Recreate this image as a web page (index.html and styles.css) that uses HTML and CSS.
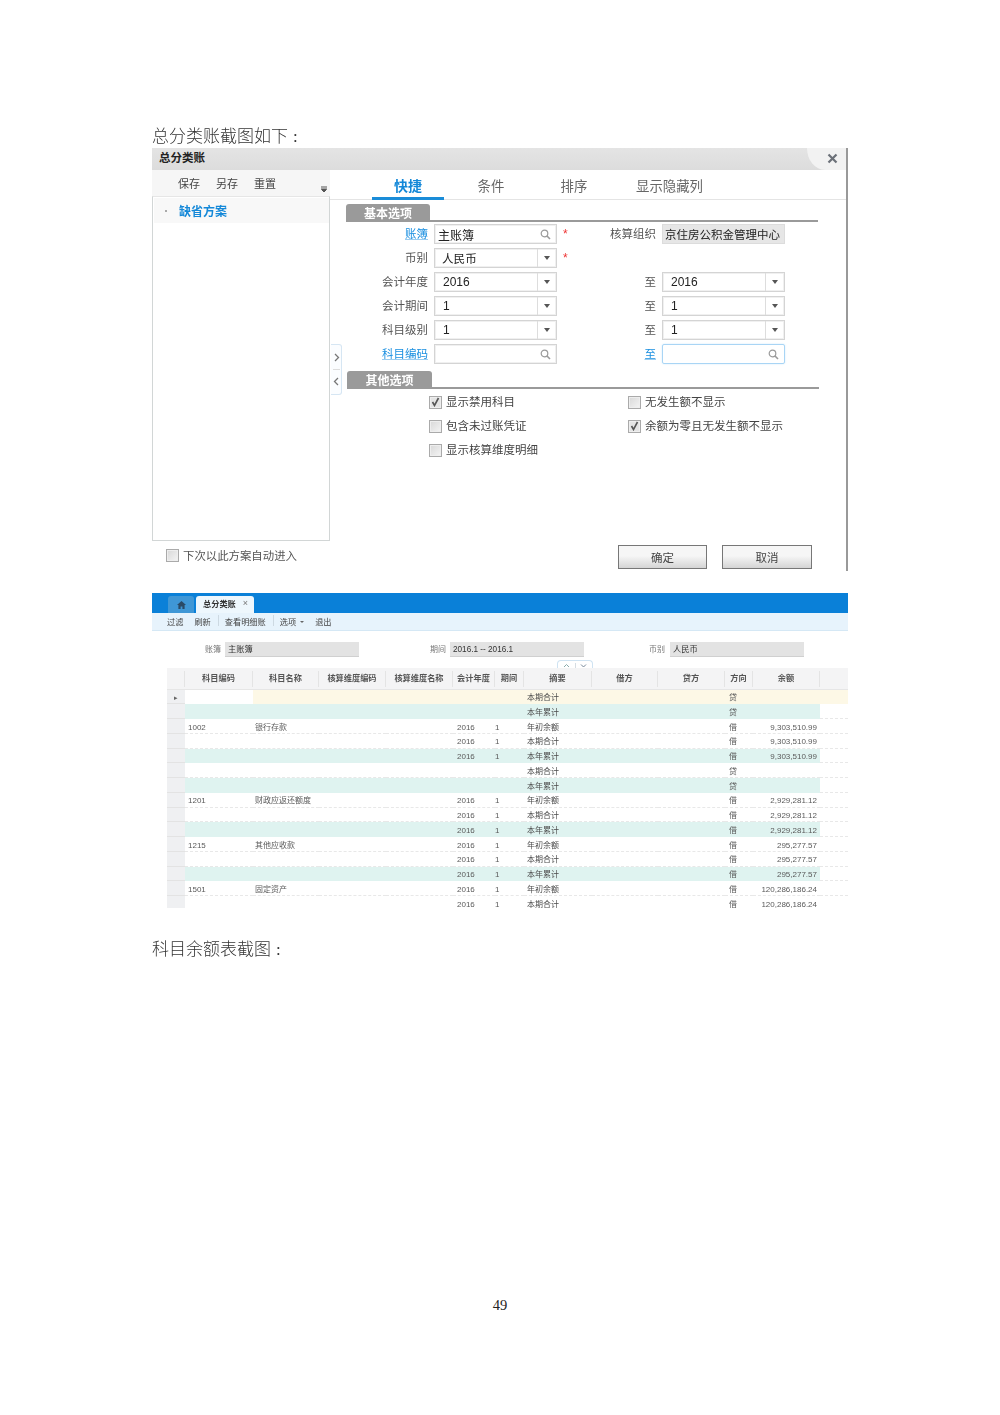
FILE: index.html
```html
<!DOCTYPE html>
<html lang="zh-CN">
<head>
<meta charset="utf-8">
<title>总分类账</title>
<link rel="stylesheet" href="styles.css">
</head>
<body>
<main class="page">
  <p class="para shot">总分类账截图如下<span class="colon">:</span></p>

  <section class="dialog shot">
    <header class="titlebar">
      <span class="title">总分类账</span>
      <span class="closebox"><svg width="11" height="11" viewBox="0 0 11 11"><path d="M1.5 1.5 9.5 9.5M9.5 1.5 1.5 9.5" stroke="#6b7078" stroke-width="2.2" fill="none"/></svg></span>
    </header>
    <div class="dialog-body">
      <aside class="left">
        <div class="left-tools">
          <span>保存</span><span>另存</span><span>重置</span>
          <svg class="more" width="6" height="6" viewBox="0 0 6 6"><path d="M0 0H6M0 2H6M0.5 3.5H5.5L3 6Z" stroke="#555" stroke-width="1" fill="#555"/></svg>
        </div>
        <div class="scheme-box">
          <div class="scheme-item"><i class="dot"></i><span>缺省方案</span></div>
        </div>
        <label class="auto-enter"><i class="check"></i><span>下次以此方案自动进入</span></label>
      </aside>

      <div class="right">
        <div class="handle">
          <svg width="7" height="9" viewBox="0 0 7 9"><path d="M2 1 5.5 4.5 2 8" stroke="#777" stroke-width="1.3" fill="none"/></svg>
          <i class="handle-sep"></i>
          <svg width="7" height="9" viewBox="0 0 7 9"><path d="M5 1 1.5 4.5 5 8" stroke="#777" stroke-width="1.3" fill="none"/></svg>
        </div>
        <nav class="tabs">
          <span class="tab active">快捷</span>
          <span class="tab">条件</span>
          <span class="tab">排序</span>
          <span class="tab">显示隐藏列</span>
        </nav>

        <div class="sec sec-first"><span>基本选项</span></div>
        <div class="form">
          <span class="lab link">账簿</span>
          <span class="inp"><b>主账簿</b><svg class="sicon" width="11" height="11" viewBox="0 0 11 11"><circle cx="4.5" cy="4.5" r="3.3" stroke="#9a9a9a" stroke-width="1.2" fill="none"/><path d="M7 7 10 10" stroke="#9a9a9a" stroke-width="1.6"/></svg></span>
          <span class="mid"><i class="star">*</i><span class="lab">核算组织</span></span>
          <span class="inp ro"><b>京住房公积金管理中心</b></span>

          <span class="lab">币别</span>
          <span class="inp sel"><b class="ind-cjk">人民币</b><i class="arrow"></i></span>
          <span class="mid"><i class="star">*</i></span>
          <span></span>

          <span class="lab">会计年度</span>
          <span class="inp sel"><b class="ind">2016</b><i class="arrow"></i></span>
          <span class="mid end"><span class="lab">至</span></span>
          <span class="inp sel"><b class="ind">2016</b><i class="arrow"></i></span>

          <span class="lab">会计期间</span>
          <span class="inp sel"><b class="ind">1</b><i class="arrow"></i></span>
          <span class="mid end"><span class="lab">至</span></span>
          <span class="inp sel"><b class="ind">1</b><i class="arrow"></i></span>

          <span class="lab">科目级别</span>
          <span class="inp sel"><b class="ind">1</b><i class="arrow"></i></span>
          <span class="mid end"><span class="lab">至</span></span>
          <span class="inp sel"><b class="ind">1</b><i class="arrow"></i></span>

          <span class="lab link">科目编码</span>
          <span class="inp"><b></b><svg class="sicon" width="11" height="11" viewBox="0 0 11 11"><circle cx="4.5" cy="4.5" r="3.3" stroke="#9a9a9a" stroke-width="1.2" fill="none"/><path d="M7 7 10 10" stroke="#9a9a9a" stroke-width="1.6"/></svg></span>
          <span class="mid end"><span class="lab link">至</span></span>
          <span class="inp focus"><b></b><svg class="sicon" width="11" height="11" viewBox="0 0 11 11"><circle cx="4.5" cy="4.5" r="3.3" stroke="#9a9a9a" stroke-width="1.2" fill="none"/><path d="M7 7 10 10" stroke="#9a9a9a" stroke-width="1.6"/></svg></span>
        </div>

        <div class="sec sec-second"><span>其他选项</span></div>
        <div class="checks">
          <label class="opt"><i class="check on"><svg width="9" height="10" viewBox="0 0 9 10"><path d="M1.5 5 3.5 8.5 7.5 1" stroke="#555" stroke-width="1.6" fill="none"/></svg></i>显示禁用科目</label>
          <label class="opt"><i class="check"></i>无发生额不显示</label>
          <label class="opt"><i class="check"></i>包含未过账凭证</label>
          <label class="opt"><i class="check on"><svg width="9" height="10" viewBox="0 0 9 10"><path d="M1.5 5 3.5 8.5 7.5 1" stroke="#555" stroke-width="1.6" fill="none"/></svg></i>余额为零且无发生额不显示</label>
          <label class="opt"><i class="check"></i>显示核算维度明细</label>
        </div>

        <div class="actions">
          <button class="btn ok">确定</button>
          <button class="btn cancel">取消</button>
        </div>
      </div>
    </div>
  </section>

  <section class="ledger shot">
    <div class="bluebar">
      <span class="home"><svg width="9" height="8" viewBox="0 0 9 8"><path d="M4.5 0 9 4H7.6V8H5.4V5.4H3.6V8H1.4V4H0Z" fill="#2a4a66"/></svg></span>
      <span class="doc-tab"><b>总分类账</b><i>×</i></span>
    </div>
    <div class="toolbar">
      <span>过滤</span><span>刷新</span><i class="tsep"></i><span>查看明细账</span><i class="tsep"></i><span>选项<i class="mini-caret"></i></span><span>退出</span>
    </div>
    <div class="filters">
      <div class="ff f1"><span>账簿</span><b>主账簿</b></div>
      <div class="ff f2"><span>期间</span><b>2016.1 -- 2016.1</b></div>
      <div class="ff f3"><span>币别</span><b>人民币</b></div>
    </div>
    <div class="toggle">
      <svg width="7" height="5" viewBox="0 0 7 5"><path d="M1 4 3.5 1.5 6 4" stroke="#8aa" fill="none"/></svg>
      <i></i>
      <svg width="7" height="5" viewBox="0 0 7 5"><path d="M1 1.5 3.5 4 6 1.5" stroke="#789" fill="none"/></svg>
    </div>
    <div class="grid">
      <div class="row head">
        <span class="rh"></span><span>科目编码</span><span>科目名称</span><span>核算维度编码</span><span>核算维度名称</span><span>会计年度</span><span>期间</span><span>摘要</span><span>借方</span><span>贷方</span><span>方向</span><span>余额</span><span class="nb"></span>
      </div>
      <div class="row yellow"><span class="rh mark">▸</span><span class="blank"></span><span></span><span></span><span></span><span></span><span></span><span class="sum">本期合计</span><span></span><span></span><span class="dir">贷</span><span></span><span></span></div>
      <div class="row teal"><span class="rh"></span><span></span><span></span><span></span><span></span><span></span><span></span><span class="sum">本年累计</span><span></span><span></span><span class="dir">贷</span><span></span><span class="end-cell"></span></div>
      <div class="row"><span class="rh"></span><span class="code">1002</span><span class="name">银行存款</span><span></span><span></span><span class="yr">2016</span><span class="pd">1</span><span class="sum">年初余额</span><span></span><span></span><span class="dir">借</span><span class="bal">9,303,510.99</span><span></span></div>
      <div class="row"><span class="rh"></span><span></span><span></span><span></span><span></span><span class="yr">2016</span><span class="pd">1</span><span class="sum">本期合计</span><span></span><span></span><span class="dir">借</span><span class="bal">9,303,510.99</span><span></span></div>
      <div class="row teal"><span class="rh"></span><span></span><span></span><span></span><span></span><span class="yr">2016</span><span class="pd">1</span><span class="sum">本年累计</span><span></span><span></span><span class="dir">借</span><span class="bal">9,303,510.99</span><span class="end-cell"></span></div>
      <div class="row"><span class="rh"></span><span></span><span></span><span></span><span></span><span></span><span></span><span class="sum">本期合计</span><span></span><span></span><span class="dir">贷</span><span></span><span></span></div>
      <div class="row teal"><span class="rh"></span><span></span><span></span><span></span><span></span><span></span><span></span><span class="sum">本年累计</span><span></span><span></span><span class="dir">贷</span><span></span><span class="end-cell"></span></div>
      <div class="row"><span class="rh"></span><span class="code">1201</span><span class="name">财政应返还额度</span><span></span><span></span><span class="yr">2016</span><span class="pd">1</span><span class="sum">年初余额</span><span></span><span></span><span class="dir">借</span><span class="bal">2,929,281.12</span><span></span></div>
      <div class="row"><span class="rh"></span><span></span><span></span><span></span><span></span><span class="yr">2016</span><span class="pd">1</span><span class="sum">本期合计</span><span></span><span></span><span class="dir">借</span><span class="bal">2,929,281.12</span><span></span></div>
      <div class="row teal"><span class="rh"></span><span></span><span></span><span></span><span></span><span class="yr">2016</span><span class="pd">1</span><span class="sum">本年累计</span><span></span><span></span><span class="dir">借</span><span class="bal">2,929,281.12</span><span class="end-cell"></span></div>
      <div class="row"><span class="rh"></span><span class="code">1215</span><span class="name">其他应收款</span><span></span><span></span><span class="yr">2016</span><span class="pd">1</span><span class="sum">年初余额</span><span></span><span></span><span class="dir">借</span><span class="bal">295,277.57</span><span></span></div>
      <div class="row"><span class="rh"></span><span></span><span></span><span></span><span></span><span class="yr">2016</span><span class="pd">1</span><span class="sum">本期合计</span><span></span><span></span><span class="dir">借</span><span class="bal">295,277.57</span><span></span></div>
      <div class="row teal"><span class="rh"></span><span></span><span></span><span></span><span></span><span class="yr">2016</span><span class="pd">1</span><span class="sum">本年累计</span><span></span><span></span><span class="dir">借</span><span class="bal">295,277.57</span><span class="end-cell"></span></div>
      <div class="row"><span class="rh"></span><span class="code">1501</span><span class="name">固定资产</span><span></span><span></span><span class="yr">2016</span><span class="pd">1</span><span class="sum">年初余额</span><span></span><span></span><span class="dir">借</span><span class="bal">120,286,186.24</span><span></span></div>
      <div class="row"><span class="rh"></span><span></span><span></span><span></span><span></span><span class="yr">2016</span><span class="pd">1</span><span class="sum">本期合计</span><span></span><span></span><span class="dir">借</span><span class="bal">120,286,186.24</span><span></span></div>
    </div>
  </section>

  <p class="para para-two shot">科目余额表截图<span class="colon">:</span></p>
  <footer class="pageno">49</footer>
</main>
</body>
</html>
```
FILE: styles.css
```css
* { box-sizing: border-box; }
html, body { margin: 0; padding: 0; background: #fff; }
body { font-family: "Liberation Sans", "Noto Sans CJK SC", sans-serif; color: #444; }
i { font-style: normal; }

.page { width: 1000px; height: 1415px; padding: 126px 152px 0; overflow: hidden; }
.para { margin: 0; height: 22px; font: 17px/22px "Liberation Serif", "Noto Sans CJK SC", serif; font-weight: 300; color: #333; white-space: nowrap; }
.para-two { margin-top: 31px; }
.colon { margin-left: 5px; }
.pageno { margin-top: 334px; height: 20px; font: 14.5px/20px "Liberation Serif", serif; color: #222; text-align: center; }
.shot { filter: blur(.35px); }

/* dialog */
.dialog { width: 696px; height: 423px; display: flex; flex-direction: column; }
.titlebar { height: 22px; flex: none; display: flex; justify-content: space-between; background: linear-gradient(#e4e4e4, #dcdcdc); border-right: 2px solid #999; }
.title { padding-left: 7px; font-size: 11.5px; font-weight: 700; line-height: 20px; color: #222; }
.closebox { width: 39px; background: #f2f2f2; border-bottom-left-radius: 18px 22px; display: flex; align-items: center; justify-content: flex-end; padding-right: 8px; padding-bottom: 2px; }
.dialog-body { flex: 1; display: flex; min-height: 0; }

.left { width: 178px; flex: none; display: flex; flex-direction: column; }
.left-tools { height: 26px; flex: none; display: flex; gap: 16px; padding: 7px 0 0 26px; background: #f6f6f6; font-size: 11px; line-height: 15px; color: #444; position: relative; }
.more { position: absolute; right: 3px; top: 16px; }
.scheme-box { height: 345px; flex: none; border: 1px solid #d2d6d6; border-top-color: #e6e6e6; padding: 1px 0 0 1px; }
.scheme-item { height: 25px; background: #f8f8f8; display: flex; align-items: center; gap: 12px; padding-left: 11px; font-size: 12px; font-weight: 700; color: #1488d8; }
.dot { width: 2px; height: 2px; background: #aaa; }
.auto-enter { display: flex; align-items: center; gap: 4px; padding: 6px 0 0 14px; font-size: 11.4px; color: #555; white-space: nowrap; }

.check { width: 13px; height: 13px; flex: none; display: flex; align-items: center; justify-content: center; background: linear-gradient(135deg, #d8d8d8, #f4f4f4); border: 1px solid #aaa; box-shadow: inset 0 0 0 1px #eee; }
.check.on { background: #e4e4e4; }

.right { flex: 1; position: relative; display: flex; flex-direction: column; border-right: 2px solid #999; padding-left: 16px; }
.handle { position: absolute; left: 1px; top: 174px; width: 11px; height: 51px; display: flex; flex-direction: column; align-items: center; justify-content: space-between; padding: 8px 0 8px; background: #fbfdff; border: 1px solid #d6e6f3; border-left: 0; border-radius: 0 3px 3px 0; }
.handle-sep { width: 7px; height: 1px; background: #ddd; }
.tabs { margin-left: -16px; height: 30px; flex: none; padding-left: 42px; display: grid; grid-template-columns: 72px 94px 72px 119px; border-bottom: 1px solid #e4e4e4; }
.tab { text-align: center; font-size: 13.4px; line-height: 34px; color: #666; height: 30px; white-space: nowrap; }
.tab.active { font-size: 14px; font-weight: 700; color: #1488d8; border-bottom: 3px solid #1a8cd8; line-height: 33px; }

.sec { width: 472px; height: 18px; flex: none; border-bottom: 2px solid #9a9a9a; }
.sec span { display: block; width: 84px; height: 16px; border-radius: 3px 3px 0 0; background: #9a9a9a; color: #fff; font-size: 12px; font-weight: 700; line-height: 20px; text-align: center; overflow: hidden; }
.sec-first { margin-top: 4px; }
.sec-second { margin: 5px 0 1px 1px; }
.sec-second span { width: 85px; }

.form { display: grid; grid-template-columns: 88px 123px 105px 123px; grid-auto-rows: 24px; align-items: center; flex: none; }
.lab { text-align: right; padding: 0 6px 3px 0; font-size: 11.5px; color: #555; white-space: nowrap; }
.link { color: #1a8fe0; text-decoration: underline; text-decoration-color: #9ccdf0; }
.mid { display: flex; align-items: center; justify-content: space-between; height: 24px; }
.mid.end { justify-content: flex-end; }
.star { color: #e33; font-size: 12px; padding-left: 6px; line-height: 12px; }
.inp { height: 20px; border: 1px solid #d4d4d4; box-shadow: inset 0 0 0 1px #f0f0f0; display: flex; align-items: center; background: #fff; }
.inp b { flex: 1; font-weight: 400; font-size: 12px; color: #222; padding-left: 3px; white-space: nowrap; overflow: hidden; }
.inp b.ind { padding-left: 8px; }
.inp b.ind-cjk { padding-left: 7px; font-size: 11.6px; }
.sicon { margin-right: 5px; }
.sel .arrow { width: 19px; height: 18px; border-left: 1px solid #ddd; position: relative; }
.sel .arrow::after { content: ""; position: absolute; left: 6px; top: 7px; border: 3.5px solid transparent; border-top: 4px solid #555; border-bottom: 0; }
.ro { background: #e6e6e6; border-color: #dcdcdc; box-shadow: none; }
.inp.ro b { font-size: 11.5px; padding-left: 2px; }
.focus { border-color: #a9d5f5; box-shadow: 0 0 2px #cfe8fa; border-radius: 2px; }

.checks { display: grid; grid-template-columns: 199px 1fr; grid-auto-rows: 24px; align-items: center; padding-left: 83px; flex: none; }
.opt { display: flex; align-items: center; gap: 4px; font-size: 11.5px; line-height: 14px; color: #444; white-space: nowrap; height: 24px; }

.actions { margin-top: auto; margin-bottom: 2px; display: flex; justify-content: flex-end; gap: 15px; padding-right: 34px; }
.btn { height: 24px; padding: 0; font: 11.5px "Liberation Sans", "Noto Sans CJK SC", sans-serif; color: #444; border: 1px solid #777; background: linear-gradient(#f6f6f6 45%, #d4d4d4); }
.ok { width: 89px; }
.cancel { width: 90px; }

/* ledger */
.ledger { margin-top: 22px; width: 696px; height: 315px; overflow: hidden; font-size: 8px; }
.bluebar { height: 20px; background: #0a80d8; padding: 3px 0 0 16px; display: flex; gap: 2px; }
.home { width: 26px; height: 17px; background: #3f97d6; border-radius: 3px 3px 0 0; display: flex; align-items: center; justify-content: center; }
.doc-tab { width: 58px; height: 17px; background: #eef7fd; border-radius: 3px 3px 0 0; display: flex; align-items: center; gap: 7px; padding: 0 0 3px 7px; font-size: 8.2px; color: #333; }
.doc-tab b { font-weight: 700; }
.doc-tab i { color: #777; font-size: 9px; }
.toolbar { height: 18px; background: #e7f3fc; border-bottom: 1px solid #d5e8f5; display: flex; align-items: center; gap: 11px; padding: 0 0 2px 15px; font-size: 8.2px; color: #444; white-space: nowrap; }
.tsep { width: 1px; height: 11px; background: #cdd9e2; margin: 0 -5px 0 -4px; }
.mini-caret { display: inline-block; margin-left: 4px; vertical-align: middle; border: 2px solid transparent; border-top: 2.5px solid #666; border-bottom: 0; }
.filters { display: flex; padding: 11px 0 3px 53px; height: 29px; }
.ff { display: flex; align-items: center; gap: 4px; color: #777; font-size: 8px; }
.ff span { width: 16px; flex: none; padding-bottom: 3px; }
.ff b { width: 134px; height: 15px; background: #e3e3e3; border-bottom: 1px solid #d0d0d0; font-weight: 400; color: #333; padding-left: 3px; line-height: 15px; font-size: 8.2px; white-space: nowrap; }
.f1 { width: 225px; }
.f2 { width: 219px; }
.f3 { gap: 5px; }
.toggle { margin-left: 405px; width: 36px; height: 8px; border: 1px solid #cfe3f2; border-bottom: 0; border-radius: 4px 4px 0 0; display: flex; align-items: center; justify-content: space-between; padding: 1px 5px 0; }
.toggle i { width: 1px; height: 5px; background: #d5dde3; }
.grid { margin-left: 15px; width: 681px; }
.row { height: 14.75px; display: grid; grid-template-columns: 18px 68px 66px 67px 67px 42px 29px 68px 66px 67px 28px 67px 28px; grid-template-rows: 14.75px; background: #fff; color: #4a4a4a; font-size: 8px; line-height: 14px; white-space: nowrap; }
.row > span { border-bottom: 1px dashed #e8e8e8; padding-top: 1.5px; overflow: hidden; }
.row > .rh { background: #eff0f2; border-bottom: 1px solid #e3e3e3; }
.head { height: 21.5px; grid-template-rows: 21.5px; background: #f4f4f5; border-bottom: 1px solid #e6e6e6; font-size: 8.2px; font-weight: 700; color: #555; text-align: center; }
.head > span { border-bottom: 0; border-right: 1px solid #e4e4e4; margin: 3px 0; padding-top: 1px; }
.head > .rh { background: transparent; border-bottom: 0; }
.head > .nb { border-right: 0; }
.yellow { background: #fdf8e6; }
.teal { background: #dff3f0; }
.yellow > span, .teal > span { border-bottom-color: transparent; }
.yellow > .blank { background: #fff; }
.teal > .end-cell { background: #fff; border-bottom-color: #e8e8e8; }
.mark { color: #666; font-size: 7px; text-align: center; }
.code, .name, .yr, .pd, .dir, .bal { color: #5a5a5a; }
.code { padding-left: 3px; }
.name { padding-left: 2px; }
.yr { padding-left: 4px; }
.pd { padding-left: 0; }
.sum { padding-left: 3px; }
.dir { padding-left: 4px; }
.bal { text-align: right; padding-right: 3px; }
```
